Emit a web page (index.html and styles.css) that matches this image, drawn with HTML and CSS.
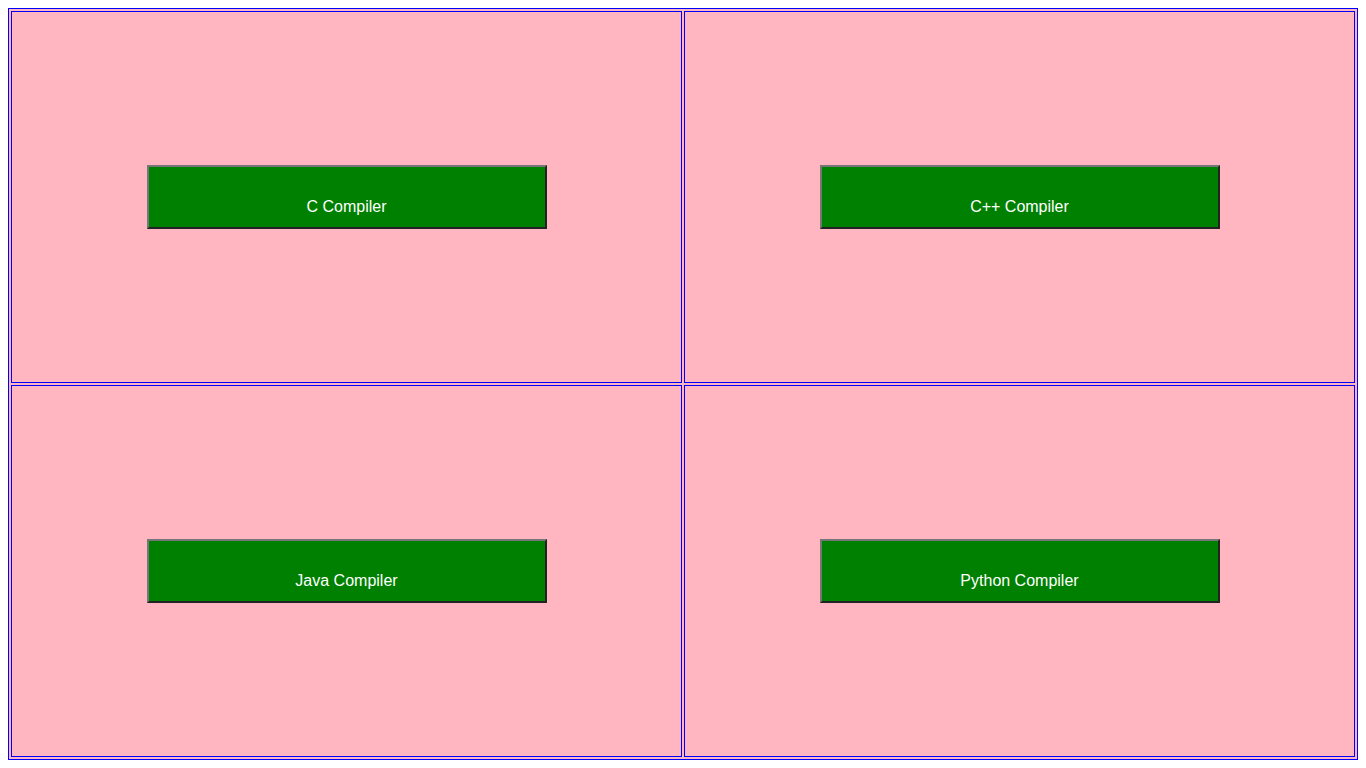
FILE: index.html
```html
<!DOCTYPE html>
<html>
<head>
<meta charset="utf-8">
<title>Compilers</title>
<link rel="stylesheet" href="styles.css">
</head>
<body>
<table class="grid">
  <tr>
    <td class="cell"><button class="btn">C Compiler</button></td>
    <td class="cell"><button class="btn">C++ Compiler</button></td>
  </tr>
  <tr>
    <td class="cell"><button class="btn">Java Compiler</button></td>
    <td class="cell"><button class="btn">Python Compiler</button></td>
  </tr>
</table>
</body>
</html>
```
FILE: styles.css
```css
html, body {
  margin: 0;
  padding: 0;
  background: #ffffff;
}
body {
  padding: 8px;
  box-sizing: border-box;
  height: 768px;
  font-family: "Liberation Sans", Arial, sans-serif;
}
.grid {
  width: 100%;
  height: 752px;
  border: 1px solid #0000ff;
  border-spacing: 2px;
  border-collapse: separate;
  background: #ffb6c1;
  table-layout: fixed;
}
.cell {
  border: 1px solid #0000ff;
  background: #ffb6c1;
  padding: 1px;
  text-align: center;
  vertical-align: middle;
}
.btn {
  box-sizing: border-box;
  width: 400px;
  height: 64px;
  margin: 0;
  padding: 31px 0 11px 0;
  background: #008000;
  color: #ffffff;
  font-family: "Liberation Sans", Arial, sans-serif;
  font-size: 16px;
  font-weight: 400;
  line-height: 18px;
  border-style: solid;
  border-width: 2px;
  border-top-color: #767676;
  border-left-color: #767676;
  border-right-color: #222222;
  border-bottom-color: #222222;
  vertical-align: middle;
  display: inline-block;
  text-align: center;
  cursor: pointer;
}
```
